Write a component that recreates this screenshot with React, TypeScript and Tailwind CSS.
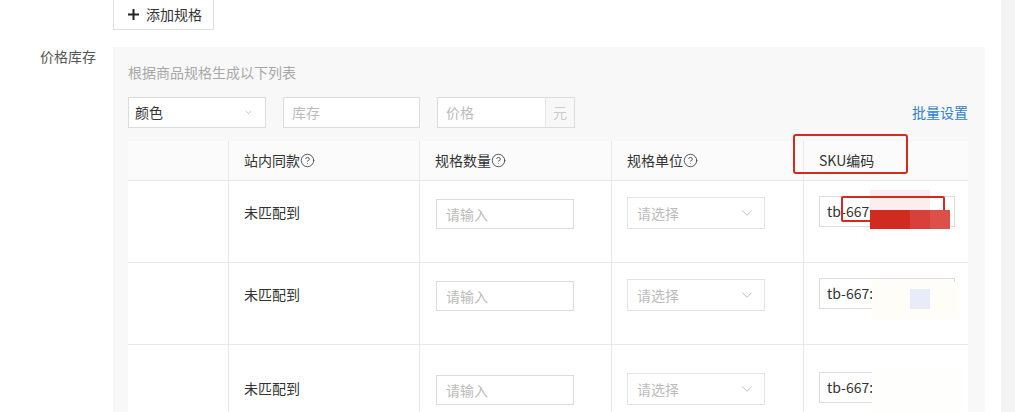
import { ChevronDown, CircleHelp } from 'lucide-react';

const cjk = '[font-family:"Noto_Sans_CJK_SC","Noto_Sans",sans-serif]';

function HeaderCell({ label, help, width }: { label: string; help?: boolean; width: string }) {
  return (
    <div className={`${width} flex items-center border-l border-[#e8e8e8] pl-[15px] text-[14px] text-[#333]`}>
      <span>{label}</span>
      {help && <CircleHelp size={15} strokeWidth={1.4} className="text-[#444]" />}
    </div>
  );
}

function SkuRow({ extraTop, last }: { extraTop: string; last?: boolean }) {
  return (
    <div className={`flex h-[82px] ${last ? '' : 'border-b border-[#e8e8e8]'}`}>
      <div className="w-[100px]" />
      <div className={`w-[191px] border-l border-[#e8e8e8] pl-[15px] ${extraTop}`}>
        <div className="mt-[21px] text-[14px] leading-[20px] text-[#333]">未匹配到</div>
      </div>
      <div className={`w-[192px] border-l border-[#e8e8e8] pl-[16px] ${extraTop}`}>
        <div className="mt-[18px] flex h-[30px] w-[138px] items-center border border-[#dcdcdc] bg-white pl-[9px] text-[14px] text-[#bbb]">
          请输入
        </div>
      </div>
      <div className={`w-[192px] border-l border-[#e8e8e8] pl-[15px] ${extraTop}`}>
        <div className="mt-[16px] flex h-[32px] w-[138px] items-center justify-between border border-[#e4e4e4] bg-white pl-[9px] pr-[8px] text-[14px] text-[#bbb]">
          <span>请选择</span>
          <ChevronDown size={18} strokeWidth={1} className="text-[#aaa]" />
        </div>
      </div>
      <div className={`flex-1 border-l border-[#e8e8e8] pl-[15px] ${extraTop}`}>
        <div className="mt-[15px] flex h-[31px] w-[136px] items-center border border-[#dcdcdc] bg-white pl-[7px] text-[14px] text-[#333]">
          tb-667:
        </div>
      </div>
    </div>
  );
}

export default function App() {
  return (
    <div className={`relative flex h-[412px] w-[1015px] overflow-hidden bg-white ${cjk}`}>
      <div className="w-[1001px]">
        {/* spec button, partly scrolled off */}
        <div className="-mt-[2px] ml-[113px] flex h-[32px] w-[101px] items-center gap-[7px] border border-[#e0e0e0] bg-white pl-[14px] text-[14px] text-[#333]">
          <svg width="11" height="11" viewBox="0 0 11 11">
            <path d="M5.5 0v11M0 5.5h11" stroke="#222" strokeWidth="2" />
          </svg>
          <span>添加规格</span>
        </div>

        <div className="mt-[17px] flex">
          <div className="w-[113px] pl-[40px] text-[14px] leading-[18px] text-[#555]">价格库存</div>

          <div className="w-[872px] bg-[#f8f8f8] pl-[15px] pr-[17px] pt-[16px] pb-[20px]">
            <div className="text-[14px] leading-[18px] text-[#a8a8a8]">根据商品规格生成以下列表</div>

            <div className="mt-[16px] flex h-[31px] items-center gap-[17px]">
              <div className="flex h-full w-[138px] items-center justify-between border border-[#dcdcdc] bg-white pl-[6px] pr-[12px] text-[14px] text-[#333]">
                <span>颜色</span>
                <ChevronDown size={9} strokeWidth={1.5} className="text-[#999]" />
              </div>
              <div className="flex h-full w-[137px] items-center border border-[#dcdcdc] bg-white pl-[8px] text-[14px] text-[#bbb]">
                库存
              </div>
              <div className="flex h-full w-[138px] border border-[#dcdcdc] bg-white text-[14px] text-[#bbb]">
                <div className="flex flex-1 items-center pl-[8px]">价格</div>
                <div className="flex w-[29px] items-center justify-center border-l border-[#e4e4e4] bg-[#f8f8f8] text-[#ccc]">元</div>
              </div>
              <div className="ml-auto text-[14px] text-[#2f7fd1]">批量设置</div>
            </div>

            <div className="mt-[13px] bg-white">
              <div className="flex h-[40px] border-b border-[#e8e8e8] bg-[#fbfbfb]">
                <div className="w-[100px]" />
                <HeaderCell label="站内同款" help width="w-[191px]" />
                <HeaderCell label="规格数量" help width="w-[192px]" />
                <HeaderCell label="规格单位" help width="w-[192px]" />
                <HeaderCell label="SKU编码" width="flex-1" />
              </div>
              <SkuRow extraTop="" />
              <SkuRow extraTop="" />
              <SkuRow extraTop="pt-[12px]" last />
            </div>
          </div>
        </div>
      </div>
      <div className="w-[14px] bg-[#f4f4f4]" />

      {/* review marks and masked codes */}
      <div className="absolute left-[793px] top-[134px] h-[40px] w-[115px] rounded-[3px] border-2 border-[#d52b1e]" />
      <div className="absolute left-[870px] top-[190px] h-[20px] w-[60px] bg-[#fdeeee]" />
      <div className="absolute left-[841px] top-[196px] h-[26px] w-[104px] rounded-[2px] border-2 border-[#d52b1e]" />
      <div className="absolute left-[870px] top-[210px] flex h-[19px] w-[80px]">
        <div className="w-[40px] bg-[#d12a1e]" />
        <div className="w-[20px] bg-[#d8413a]" />
        <div className="w-[20px] bg-[#dd5049]" />
      </div>
      <div className="absolute left-[872px] top-[282px] h-[36px] w-[86px] bg-[#fefdf8]" />
      <div className="absolute left-[910px] top-[289px] h-[20px] w-[20px] bg-[#e8ecf8]" />
      <div className="absolute left-[872px] top-[368px] h-[44px] w-[90px] bg-[#fefefc]" />
    </div>
  );
}
